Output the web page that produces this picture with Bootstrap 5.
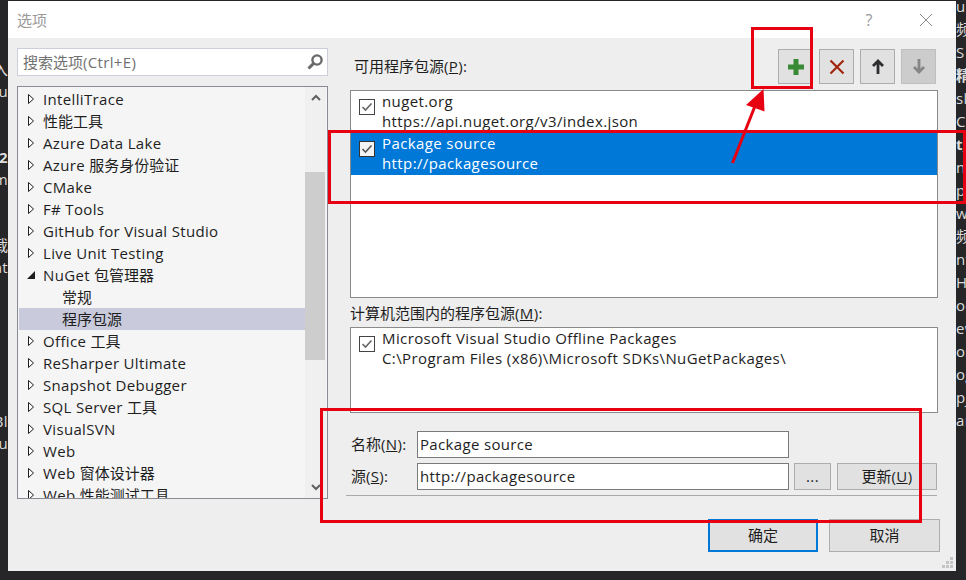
<!DOCTYPE html>
<html lang="zh-CN">
<head>
<meta charset="utf-8">
<title>选项</title>
<link href="https://cdn.jsdelivr.net/npm/bootstrap@5.3.0/dist/css/bootstrap.min.css" rel="stylesheet">
<style>
html,body{height:100%;}
body{background:#262628;overflow:hidden;font-family:"Open Sans","Noto Sans CJK SC",sans-serif;font-size:15px;color:#1e1e1e;line-height:20px;position:relative;letter-spacing:.34px;}
.zh{letter-spacing:0;}
.stage{width:966px;height:580px;padding-top:1px;}
.strip{color:#dcdcdc;overflow:hidden;white-space:nowrap;flex:none;}
.strip-left{width:8px;padding-top:13px;text-align:right;direction:rtl;}
.strip-left div{height:22px;line-height:22px;}
.strip-right{width:10px;margin-top:-6px;}
.strip-right div{height:23px;line-height:23px;}
.win{width:948px;height:570px;background:#eeeeee;flex:none;position:relative;}
.titlebar{height:37px;background:#fff;color:#999;padding:0 9px;}
.title-q{width:20px;text-align:center;margin-right:41px;color:#999;font-size:16px;}
.title-x{margin-right:15px;}
.pane-left{width:311px;margin-left:9px;margin-top:10px;flex:none;}
.searchbox{height:28px;border:1px solid #ccCEDB;background:#fff;color:#717171;padding:0 3px 0 5px;margin-bottom:10px;}
.tree{height:413px;border:1px solid #8a8a92;background:#f5f5f5;overflow:hidden;}
.tree-rows{padding-top:1px;width:287px;flex:none;padding-left:1px;}
.tree-row{height:22px;line-height:22px;white-space:nowrap;padding-left:8px;gap:8px;}
.tree-row.kid{padding-left:43px;}
.tree-row.sel{background:#c9cbdc;}
.tree-scroll{width:21px;background:#f0f0f0;margin-right:1px;flex:none;position:relative;}
.tree-thumb{height:188px;background:#cdcdcd;margin:0 1px 0 0;}
.tree-gap{height:85px;padding-top:7px;}
.tree-rest{height:138px;padding-top:123px;}
.pane-right{width:590px;margin-left:22px;flex:none;}
.head-row{height:35px;margin-top:11px;margin-bottom:6px;padding-left:4px;padding-right:4px;}
.head-label{padding-bottom:2px;}
.head-btns{gap:6px;}
.tb{width:35px;height:35px;padding:0;background:#e1e1e1;border:1px solid #adadad;border-radius:0;}
.tb-off{background:#cccccc;border-color:#bfbfbf;}
.srclist{width:588px;border:1px solid #8a8a8a;background:#fff;border-radius:0;overflow:hidden;}
.srclist-a{height:208px;}
.srclist-b{height:86px;}
.src{height:42px;padding:0 0 0 8px;gap:7px;border:0;border-radius:0;background:transparent;color:#1e1e1e;line-height:20px;margin:0;letter-spacing:.39px;}
.src.list-group-item.active{background:#0078d7;color:#fff;border:0;margin:0;}
.src-check{margin-top:8px;flex:none;display:block;}
.label-b{height:29px;line-height:30px;}
.form-zone{padding-top:18px;width:587px;}
.f-row{height:27px;margin-bottom:5px;}
.f-label{width:67px;padding:0 0 2px 1px;}
.f-input.form-control{width:372px;height:27px;border:1px solid #7a7a7a;border-radius:0;font-size:15px;padding:0 2px 2px;color:#1e1e1e;box-shadow:none;line-height:20px;font-family:inherit;letter-spacing:.34px;}
.f-btn{height:27px;padding:0 0 2px;background:#e1e1e1;border:1px solid #adadad;border-radius:0;font-size:15px;color:#1e1e1e;line-height:20px;letter-spacing:.34px;}
.f-dots{width:37px;margin-left:5px;}
.f-upd{width:100px;margin-left:6px;}
.f-sep{height:1px;background:#a9a9a9;margin:3px 0 0 -4px;width:591px;}
.foot{padding-top:23px;width:590px;}
.dlg-btn{width:110px;height:33px;padding:0;background:#e1e1e1;border:1px solid #adadad;border-radius:0;font-size:15px;color:#1e1e1e;}
.dlg-ok{border:2px solid #0078d7;margin-right:11px;}
.dlg-no{width:111px;}
.grip{position:absolute;right:3px;bottom:2px;}
.mark-red{position:absolute;z-index:5;border:3px solid #e60012;pointer-events:none;}
.mark-a{left:751px;top:27px;width:62px;height:62px;}
.mark-b{left:328px;top:130px;width:638px;height:74px;}
.mark-c{left:320px;top:408px;width:602px;height:115px;}
.mark-arrow{position:absolute;z-index:5;left:720px;top:80px;pointer-events:none;}
</style>
</head>
<body>
<div class="stage d-flex">
  <div class="strip strip-left">
    <div></div><div></div><div class="zh">入</div><div>u</div><div></div><div></div><div class="fw-bold">2:</div><div>m</div><div></div><div></div><div class="zh">下载</div><div>at</div>
    <div></div><div></div><div></div><div></div><div></div><div></div><div>Bl</div><div>lu</div>
  </div>
  <div class="win d-flex flex-column">
    <div class="titlebar d-flex align-items-center">
      <span class="zh">选项</span>
      <span class="title-q ms-auto">?</span>
      <svg class="title-x" width="12" height="12" viewBox="0 0 12 12"><path d="M0 0 12 12M12 0 0 12" stroke="#8a8a8a" stroke-width="1" fill="none"/></svg>
    </div>
    <div class="d-flex">
      <div class="pane-left">
        <div class="searchbox d-flex align-items-center justify-content-between">
          <span><span class="zh">搜索选项</span>(Ctrl+E)</span>
          <svg width="18" height="18" viewBox="0 0 18 18"><circle cx="11" cy="7" r="4.600" fill="none" stroke="#6a6a6a" stroke-width="2.400"/><path d="M7.600 10.400 2.500 15.500" stroke="#6a6a6a" stroke-width="3"/></svg>
        </div>
        <div class="tree d-flex justify-content-between">
          <div class="tree-rows">
            <div class="tree-row d-flex align-items-center"><svg width="8" height="12" viewBox="0 0 8 12"><path d="M1.500 1.500 6.500 6 1.500 10.500Z" fill="#fff" stroke="#1e1e1e"/></svg><span>IntelliTrace</span></div>
            <div class="tree-row d-flex align-items-center"><svg width="8" height="12" viewBox="0 0 8 12"><path d="M1.500 1.500 6.500 6 1.500 10.500Z" fill="#fff" stroke="#1e1e1e"/></svg><span class="zh">性能工具</span></div>
            <div class="tree-row d-flex align-items-center"><svg width="8" height="12" viewBox="0 0 8 12"><path d="M1.500 1.500 6.500 6 1.500 10.500Z" fill="#fff" stroke="#1e1e1e"/></svg><span>Azure Data Lake</span></div>
            <div class="tree-row d-flex align-items-center"><svg width="8" height="12" viewBox="0 0 8 12"><path d="M1.500 1.500 6.500 6 1.500 10.500Z" fill="#fff" stroke="#1e1e1e"/></svg><span>Azure <span class="zh">服务身份验证</span></span></div>
            <div class="tree-row d-flex align-items-center"><svg width="8" height="12" viewBox="0 0 8 12"><path d="M1.500 1.500 6.500 6 1.500 10.500Z" fill="#fff" stroke="#1e1e1e"/></svg><span>CMake</span></div>
            <div class="tree-row d-flex align-items-center"><svg width="8" height="12" viewBox="0 0 8 12"><path d="M1.500 1.500 6.500 6 1.500 10.500Z" fill="#fff" stroke="#1e1e1e"/></svg><span>F# Tools</span></div>
            <div class="tree-row d-flex align-items-center"><svg width="8" height="12" viewBox="0 0 8 12"><path d="M1.500 1.500 6.500 6 1.500 10.500Z" fill="#fff" stroke="#1e1e1e"/></svg><span>GitHub for Visual Studio</span></div>
            <div class="tree-row d-flex align-items-center"><svg width="8" height="12" viewBox="0 0 8 12"><path d="M1.500 1.500 6.500 6 1.500 10.500Z" fill="#fff" stroke="#1e1e1e"/></svg><span>Live Unit Testing</span></div>
            <div class="tree-row d-flex align-items-center"><svg width="8" height="12" viewBox="0 0 8 12"><path d="M8 2V10H0Z" fill="#1e1e1e"/></svg><span>NuGet <span class="zh">包管理器</span></span></div>
            <div class="tree-row kid zh">常规</div>
            <div class="tree-row kid sel zh">程序包源</div>
            <div class="tree-row d-flex align-items-center"><svg width="8" height="12" viewBox="0 0 8 12"><path d="M1.500 1.500 6.500 6 1.500 10.500Z" fill="#fff" stroke="#1e1e1e"/></svg><span>Office <span class="zh">工具</span></span></div>
            <div class="tree-row d-flex align-items-center"><svg width="8" height="12" viewBox="0 0 8 12"><path d="M1.500 1.500 6.500 6 1.500 10.500Z" fill="#fff" stroke="#1e1e1e"/></svg><span>ReSharper Ultimate</span></div>
            <div class="tree-row d-flex align-items-center"><svg width="8" height="12" viewBox="0 0 8 12"><path d="M1.500 1.500 6.500 6 1.500 10.500Z" fill="#fff" stroke="#1e1e1e"/></svg><span>Snapshot Debugger</span></div>
            <div class="tree-row d-flex align-items-center"><svg width="8" height="12" viewBox="0 0 8 12"><path d="M1.500 1.500 6.500 6 1.500 10.500Z" fill="#fff" stroke="#1e1e1e"/></svg><span>SQL Server <span class="zh">工具</span></span></div>
            <div class="tree-row d-flex align-items-center"><svg width="8" height="12" viewBox="0 0 8 12"><path d="M1.500 1.500 6.500 6 1.500 10.500Z" fill="#fff" stroke="#1e1e1e"/></svg><span>VisualSVN</span></div>
            <div class="tree-row d-flex align-items-center"><svg width="8" height="12" viewBox="0 0 8 12"><path d="M1.500 1.500 6.500 6 1.500 10.500Z" fill="#fff" stroke="#1e1e1e"/></svg><span>Web</span></div>
            <div class="tree-row d-flex align-items-center"><svg width="8" height="12" viewBox="0 0 8 12"><path d="M1.500 1.500 6.500 6 1.500 10.500Z" fill="#fff" stroke="#1e1e1e"/></svg><span>Web <span class="zh">窗体设计器</span></span></div>
            <div class="tree-row d-flex align-items-center"><svg width="8" height="12" viewBox="0 0 8 12"><path d="M1.500 1.500 6.500 6 1.500 10.500Z" fill="#fff" stroke="#1e1e1e"/></svg><span>Web <span class="zh">性能测试工具</span></span></div>
          </div>
          <div class="tree-scroll">
            <div class="tree-gap d-flex justify-content-center align-items-start"><svg width="10" height="8" viewBox="0 0 10 8"><path d="M1 6 5 2 9 6" fill="none" stroke="#606060" stroke-width="2"/></svg></div>
            <div class="tree-thumb"></div>
            <div class="tree-rest d-flex justify-content-center align-items-start"><svg width="10" height="8" viewBox="0 0 10 8"><path d="M1 2 5 6 9 2" fill="none" stroke="#606060" stroke-width="2"/></svg></div>
          </div>
        </div>
      </div>
      <div class="pane-right">
        <div class="head-row d-flex align-items-center justify-content-between">
          <span class="head-label"><span class="zh">可用程序包源</span>(<u>P</u>):</span>
          <div class="head-btns d-flex">
            <button class="btn tb d-flex align-items-center justify-content-center" type="button"><svg width="16" height="16" viewBox="0 0 16 16"><path d="M5.500 0h5v5.500H16v5h-5.500V16h-5v-5.500H0v-5h5.500Z" fill="#388a34"/></svg></button>
            <button class="btn tb d-flex align-items-center justify-content-center" type="button"><svg width="16" height="16" viewBox="0 0 16 16"><path d="M1.500 1.500 14.500 14.500M14.500 1.500 1.500 14.500" stroke="#a1260d" stroke-width="2.200" fill="none"/></svg></button>
            <button class="btn tb d-flex align-items-center justify-content-center" type="button"><svg width="12" height="15" viewBox="0 0 12 15"><path d="M6 15V2M1 7 6 2 11 7" stroke="#2d2d30" stroke-width="2.800" fill="none"/></svg></button>
            <button class="btn tb tb-off d-flex align-items-center justify-content-center" type="button"><svg width="12" height="15" viewBox="0 0 12 15"><path d="M6 0V13M1 8 6 13 11 8" stroke="#858585" stroke-width="2.800" fill="none"/></svg></button>
          </div>
        </div>
        <div class="list-group srclist srclist-a">
          <div class="list-group-item src d-flex">
            <svg class="src-check" width="16" height="16" viewBox="0 0 16 16"><rect x=".5" y=".5" width="15" height="15" fill="#fff" stroke="#444"/><path d="M3.500 8 6.500 11 12.500 4.500" fill="none" stroke="#666" stroke-width="1.600"/></svg>
            <div>nuget.org<br>https://api.nuget.org/v3/index.json</div>
          </div>
          <div class="list-group-item src active d-flex">
            <svg class="src-check" width="16" height="16" viewBox="0 0 16 16"><rect x=".5" y=".5" width="15" height="15" fill="#f3f3f3" stroke="#333"/><path d="M3.500 8 6.500 11 12.500 4.500" fill="none" stroke="#555" stroke-width="1.600"/></svg>
            <div>Package source<br>http://packagesource</div>
          </div>
        </div>
        <div class="label-b"><span class="zh">计算机范围内的程序包源</span>(<u>M</u>):</div>
        <div class="list-group srclist srclist-b">
          <div class="list-group-item src d-flex">
            <svg class="src-check" width="16" height="16" viewBox="0 0 16 16"><rect x=".5" y=".5" width="15" height="15" fill="#fff" stroke="#444"/><path d="M3.500 8 6.500 11 12.500 4.500" fill="none" stroke="#666" stroke-width="1.600"/></svg>
            <div>Microsoft Visual Studio Offline Packages<br>C:\Program Files (x86)\Microsoft SDKs\NuGetPackages\</div>
          </div>
        </div>
        <div class="form-zone">
          <div class="f-row d-flex align-items-center">
            <label class="f-label" for="f1"><span class="zh">名称</span>(<u>N</u>):</label>
            <input id="f1" class="form-control f-input" type="text" value="Package source">
          </div>
          <div class="f-row d-flex align-items-center">
            <label class="f-label" for="f2"><span class="zh">源</span>(<u>S</u>):</label>
            <input id="f2" class="form-control f-input" type="text" value="http://packagesource">
            <button class="btn f-btn f-dots" type="button">...</button>
            <button class="btn f-btn f-upd" type="button"><span class="zh">更新</span>(<u>U</u>)</button>
          </div>
          <div class="f-sep"></div>
        </div>
        <div class="foot d-flex justify-content-end">
          <button class="btn dlg-btn dlg-ok zh" type="button">确定</button>
          <button class="btn dlg-btn dlg-no zh" type="button">取消</button>
        </div>
      </div>
    </div>
    <svg class="grip" width="12" height="12" viewBox="0 0 12 12"><path d="M9 0h3v3H9ZM5 4h3v3H5ZM9 4h3v3H9ZM1 8h3v3H1ZM5 8h3v3H5ZM9 8h3v3H9Z" fill="#c4c4c4"/></svg>
  </div>
  <div class="strip strip-right">
    <div>u</div><div class="zh">频</div><div>S</div><div class="fw-bold zh">精</div><div>sl</div><div>C</div><div class="fw-bold">t_</div><div>n</div><div>pp</div><div>w</div><div class="zh">频</div><div>nt</div><div>H</div><div>oc</div><div>ew</div><div>os</div><div>og</div><div>pj</div><div>ar</div>
  </div>
</div>
<div class="mark-red mark-a"></div>
<div class="mark-red mark-b"></div>
<div class="mark-red mark-c"></div>
<svg class="mark-arrow" width="60" height="90" viewBox="720 80 60 90"><path d="M732.500 163 755 106" stroke="#e60012" stroke-width="3" fill="none"/><path d="M763.500 89 746 105 764.500 111.500Z" fill="#e60012"/></svg>
</body>
</html>
